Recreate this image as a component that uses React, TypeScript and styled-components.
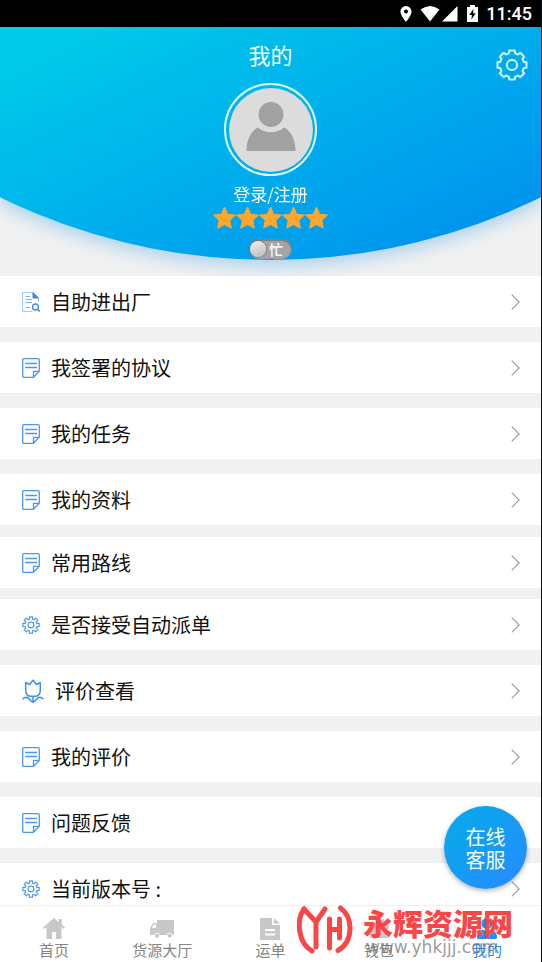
import React from "react";
import styled, { createGlobalStyle } from "styled-components";

const GlobalStyle = createGlobalStyle`
  * { box-sizing: border-box; }
  body { margin: 0; background: #0b141a; }
  button, input { font: inherit; color: inherit; margin: 0; padding: 0; border: 0; background: none; }
  button { cursor: pointer; }
  a { color: inherit; text-decoration: none; }
  ul { list-style: none; margin: 0; padding: 0; }
  svg { display: block; flex: none; }
`;

const Screen = styled.div`
  display: flex;
  flex-direction: column;
  height: 100vh;
  overflow: hidden;
  position: relative;
  background: #f1f1f1;
  border-right: 1px solid #0b141a;
  color: #111;
  font-family: "Noto Sans CJK SC", "Noto Sans", sans-serif;
`;

const StatusBar = styled.div`
  flex: none;
  display: flex;
  align-items: center;
  justify-content: flex-end;
  height: 27px;
  padding-right: 9px;
  background: #000;
  color: #fff;
`;

const StatusIcons = styled.svg`
  margin-right: 8px;
`;

const Clock = styled.time`
  font: 500 18px/27px Roboto, sans-serif;
`;

const Content = styled.main`
  flex: 1;
  min-height: 0;
  overflow: hidden;
`;

const Hero = styled.header`
  height: 249px;
  overflow: hidden;
`;

const HeroShadow = styled.div`
  filter: drop-shadow(0 6px 9px rgba(0, 140, 235, 0.3));
`;

const HeroPanel = styled.div`
  display: grid;
  grid-template-columns: 1fr auto 1fr;
  align-items: start;
  height: 233px;
  background: linear-gradient(154deg, #00cae9 8%, #00b1ec 46%, #008dee 98%);
  clip-path: ellipse(113.5% 614px at 50% -381px);
`;

const Profile = styled.div`
  grid-column: 2;
  display: flex;
  flex-direction: column;
  align-items: center;
  padding-top: 11px;
`;

const Title = styled.h1`
  margin: 0 0 13px;
  font-size: 22px;
  line-height: 32px;
  font-weight: 400;
  color: #f2ffff;
`;

const Avatar = styled.div`
  display: flex;
  align-items: center;
  justify-content: center;
  width: 93px;
  height: 93px;
  margin-bottom: 6px;
  border: 2px solid #d6fbff;
  border-radius: 50%;
`;

const Login = styled.a`
  color: #fff;
  font-size: 17px;
  line-height: 24px;
`;

const Stars = styled.div`
  display: flex;
  height: 24px;
  margin-bottom: 9px;
`;

const Toggle = styled.label`
  display: flex;
  align-items: center;
  width: 43px;
  height: 20px;
  border-radius: 10px;
  background: #a4a4a4;
  box-shadow: inset 0 1px 1px 1px rgba(90, 100, 110, 0.55);
  color: #f4f4f4;
  font-size: 14px;
  line-height: 20px;
  font-weight: 700;
`;

const Knob = styled.input`
  appearance: none;
  width: 16px;
  height: 16px;
  margin: 0 3px 0 1px;
  border-radius: 50%;
  background: linear-gradient(160deg, #efefef, #bcbcbc);
  box-shadow: 0 0 2px rgba(0, 0, 0, 0.45);
`;

const Settings = styled.button`
  grid-column: 3;
  justify-self: end;
  margin: 22px 13px 0 0;
`;

const Item = styled.li<{ $gap: number }>`
  margin-top: ${(p) => p.$gap}px;
  background: #fff;
`;

const RowButton = styled.button`
  display: flex;
  align-items: center;
  width: 100%;
  height: 51px;
  padding: 0 21px 0 22px;
  gap: 11px;
  text-align: left;
  font-size: 20px;
  line-height: 30px;
`;

const RowLabel = styled.span`
  flex: 1;
`;

const Tabs = styled.nav`
  flex: none;
  display: grid;
  grid-template-columns: repeat(5, 1fr);
  height: 57px;
  background: #fff;
  border-top: 1px solid #eee;
`;

const Tab = styled.a<{ $active?: boolean }>`
  display: flex;
  flex-direction: column;
  align-items: center;
  padding-top: 10px;
  color: ${(p) => (p.$active ? "#2090f2" : "#858585")};
  font-size: 15px;
  line-height: 20px;

  svg {
    fill: ${(p) => (p.$active ? "#2090f2" : "#c8c8c8")};
  }
`;

const Support = styled.button`
  position: absolute;
  right: 14px;
  bottom: 73px;
  width: 83px;
  height: 83px;
  padding: 0 20px;
  border-radius: 50%;
  background: linear-gradient(135deg, #07a9ea 12%, #268dff 90%);
  box-shadow: 0 2px 5px rgba(0, 0, 0, 0.3);
  color: #f0ffff;
  font-size: 20px;
  line-height: 23px;
`;

const Watermark = styled.div`
  position: absolute;
  right: 28px;
  bottom: 7px;
  display: flex;
  align-items: center;
  gap: 10px;
  pointer-events: none;
`;

const WatermarkName = styled.div`
  color: #f94748;
  font-size: 30px;
  line-height: 34px;
  font-weight: 900;
`;

const WatermarkSite = styled.div`
  margin-left: 3px;
  color: rgba(110, 110, 110, 0.7);
  font: 17px/16px "DejaVu Sans", sans-serif;
`;

/** Outline of a cog with eight square teeth, centred on the origin. */
function cogPath(inner: number, outer: number) {
  const points: string[] = [];
  for (let i = 0; i < 8; i++) {
    const base = (i * Math.PI) / 4;
    const corners: [number, number][] = [
      [-0.26, inner],
      [-0.19, outer],
      [0.19, outer],
      [0.26, inner],
    ];
    corners.forEach(([turn, radius]) => {
      const x = (Math.sin(base + turn) * radius).toFixed(2);
      const y = (-Math.cos(base + turn) * radius).toFixed(2);
      points.push(`${x} ${y}`);
    });
  }
  return `M${points.join("L")}Z`;
}

type CogProps = { size: number; color: string; width: number; inner: number };

const Cog = ({ size, color, width, inner }: CogProps) => (
  <svg width={size} height={size} viewBox="-10 -10 20 20" fill="none" stroke={color} strokeWidth={width} strokeLinejoin="round">
    <path d={cogPath(inner, 9.2)} />
    <circle r="3.2" />
  </svg>
);

const RowCog = () => <Cog size={18} color="#4a98ee" width={1.3} inner={6.8} />;

const NoteIcon = () => (
  <svg width="18" height="20" viewBox="0 0 18 20" fill="none" stroke="#4a98ee" strokeWidth="1.3">
    <path d="M11.5 19.3H2Q.7 19.3.7 18V2Q.7.7 2 .7H16Q17.3.7 17.3 2V13.3L11.5 19.3V13.3H17.3M3.2 5.5H15M3.2 9.5H15" />
  </svg>
);

const SearchDocIcon = () => (
  <svg width="18" height="20" viewBox="0 0 18 20" fill="none" stroke="#9cc5f6" strokeWidth="1">
    <path d="M16.5 10V6L11 .6H.6V19.4H10" />
    <path d="M11 .6V6H16.5Z" fill="#3f86dd" stroke="#3f86dd" />
    <path d="M3.5 4.5H8M3.5 7.5H10M3.5 10.5H10M3.5 15.5H8" stroke="#7fb4f0" />
    <circle cx="13.5" cy="15" r="3" stroke="#3f8be6" strokeWidth="1.3" />
    <path d="M15.6 17.2L18 19.6" stroke="#3f8be6" strokeWidth="1.4" />
  </svg>
);

const TulipIcon = () => (
  <svg width="22" height="24" viewBox="0 0 22 24" fill="none" stroke="#3d92e8" strokeWidth="1.5" strokeLinejoin="round">
    <path d="M7.5 5.500L11 1.200L14.500 5.500L18.300 3.500V11Q18.300 16.800 13.500 17.300H8.500Q3.700 16.800 3.700 11V3.500ZM11 17.300V23.500" />
    <path d="M.6 20.2Q4.5 16.4 7.4 20.3Q9.5 23 11 23Q12.5 23 14.6 20.3Q17.5 16.4 21.4 20.2" />
  </svg>
);

const Chevron = () => (
  <svg width="9" height="16" viewBox="0 0 9 16" fill="none" stroke="#999" strokeWidth="1.1">
    <path d="M.7.6L8.2 8L.7 15.4" />
  </svg>
);

const Star = () => (
  <svg width="23" height="24" viewBox="0 0 23 24" fill="#ffa62f" stroke="#ffa62f" strokeWidth="1" strokeLinejoin="round">
    <path d="M11.5 1L14.8 8.2L22.5 9.1L16.8 14.4L18.4 22.2L11.5 18.6L4.6 22.2L6.2 14.4L.5 9.1L8.2 8.2Z" />
  </svg>
);

const rows = [
  { label: "自助进出厂", icon: <SearchDocIcon />, gap: 0 },
  { label: "我签署的协议", icon: <NoteIcon />, gap: 15 },
  { label: "我的任务", icon: <NoteIcon />, gap: 15 },
  { label: "我的资料", icon: <NoteIcon />, gap: 15 },
  { label: "常用路线", icon: <NoteIcon />, gap: 12 },
  { label: "是否接受自动派单", icon: <RowCog />, gap: 11 },
  { label: "评价查看", icon: <TulipIcon />, gap: 15 },
  { label: "我的评价", icon: <NoteIcon />, gap: 15 },
  { label: "问题反馈", icon: <NoteIcon />, gap: 15 },
  { label: "当前版本号 :", icon: <RowCog />, gap: 15 },
];

const tabs = [
  { label: "首页", icon: <path d="M11 3.5L3.5 10V22H9V15H13V22H18.5V10ZM11 1L0 10.5L1.2 12L11 3.6L20.8 12L22 10.5L18.8 7.7V2H15.6V5Z" /> },
  { label: "货源大厅", icon: <path d="M6 3H23V18H21.6A3 3 0 0 0 15.8 18H8.8A3 3 0 0 0 3 18H-1V11L2 6H6ZM5 7.5H2.6L1 11H5ZM6 16.6A2.1 2.1 0 1 1 5.9 16.6ZM18.7 16.6A2.1 2.1 0 1 1 18.6 16.6Z" fillRule="evenodd" /> },
  { label: "运单", icon: <path d="M1 1H13V8H21V23H1ZM15 1L21 6.5H15ZM6 12V14H16V12ZM6 16.5V18.5H16V16.5Z" fillRule="evenodd" /> },
  { label: "钱包", icon: <path d="M2 8L16 2L18 8H21V21H2ZM14 12V16H21V12Z" fillRule="evenodd" /> },
  { label: "我的", icon: <path d="M11 1A5.5 5.5 0 1 1 10.9 1ZM1 21Q1 14 7 12.5Q11 16 15 12.5Q21 14 21 21Q21 22 20 22H2Q1 22 1 21Z" />, active: true },
];

export default function App() {
  return (
    <>
      <GlobalStyle />
      <Screen>
        <StatusBar>
          <StatusIcons width="78" height="18" viewBox="0 0 78 18" fill="#fff">
            <path d="M6 1A5.6 5.6 0 0 0 .4 6.6C.4 10.7 6 17 6 17S11.6 10.7 11.6 6.6A5.6 5.6 0 0 0 6 1ZM6 4.5A2 2 0 1 1 5.99 4.5Z" fillRule="evenodd" />
            <path d="M20.5 4.5Q30 -2.5 39.5 4.5L30 16.5ZM57.500 1V16.500H42Z" />
            <path d="M70 0H75V2H78V17H67V2H70ZM73.5 3.8L69.3 10H72L71.3 14.8L75.7 8.3H73Z" fillRule="evenodd" />
          </StatusIcons>
          <Clock>11:45</Clock>
        </StatusBar>
        <Content>
          <Hero>
            <HeroShadow>
              <HeroPanel>
                <Profile>
                  <Title>我的</Title>
                  <Avatar>
                    <svg width="84" height="84" viewBox="0 0 84 84">
                      <circle cx="42" cy="42" r="42" fill="#dcdcdc" />
                      <circle cx="42" cy="26.5" r="12.5" fill="#a1a1a1" />
                      <path d="M17.5 63C17.5 53 21 44 28.5 39.500Q42 49 55.500 39.500C63 44 66.500 53 66.500 63Z" fill="#a1a1a1" />
                    </svg>
                  </Avatar>
                  <Login href="#login">登录/注册</Login>
                  <Stars role="img" aria-label="5">
                    {[1, 2, 3, 4, 5].map((n) => (
                      <Star key={n} />
                    ))}
                  </Stars>
                  <Toggle>
                    <Knob type="checkbox" role="switch" />忙
                  </Toggle>
                </Profile>
                <Settings aria-label="设置">
                  <Cog size={32} color="#c8f4ff" width={1.3} inner={7.6} />
                </Settings>
              </HeroPanel>
            </HeroShadow>
          </Hero>
          <ul>
            {rows.map((row) => (
              <Item key={row.label} $gap={row.gap}>
                <RowButton>
                  {row.icon}
                  <RowLabel>{row.label}</RowLabel>
                  <Chevron />
                </RowButton>
              </Item>
            ))}
          </ul>
        </Content>
        <Tabs>
          {tabs.map((tab) => (
            <Tab key={tab.label} href={`#${tab.label}`} $active={tab.active}>
              <svg width="24" height="24" viewBox="-1 -1 24 24">{tab.icon}</svg>
              {tab.label}
            </Tab>
          ))}
        </Tabs>
        <Support>在线客服</Support>
        <Watermark>
          <svg width="56" height="50" viewBox="0 0 56 50" fill="none" stroke="#f94748" strokeLinecap="round" strokeLinejoin="round">
            <path d="M7 4C-1 15 1 38 15 46M43.500 3C57 13 56 37 41 45.500" strokeWidth="5" />
            <path d="M7 4L19 17L28 4M19 17V42M32.500 14V43M32.500 24.500H42.500M42.500 14V33" strokeWidth="5" />
          </svg>
          <div>
            <WatermarkName>永辉资源网</WatermarkName>
            <WatermarkSite>www.yhkjjj.com</WatermarkSite>
          </div>
        </Watermark>
      </Screen>
    </>
  );
}
